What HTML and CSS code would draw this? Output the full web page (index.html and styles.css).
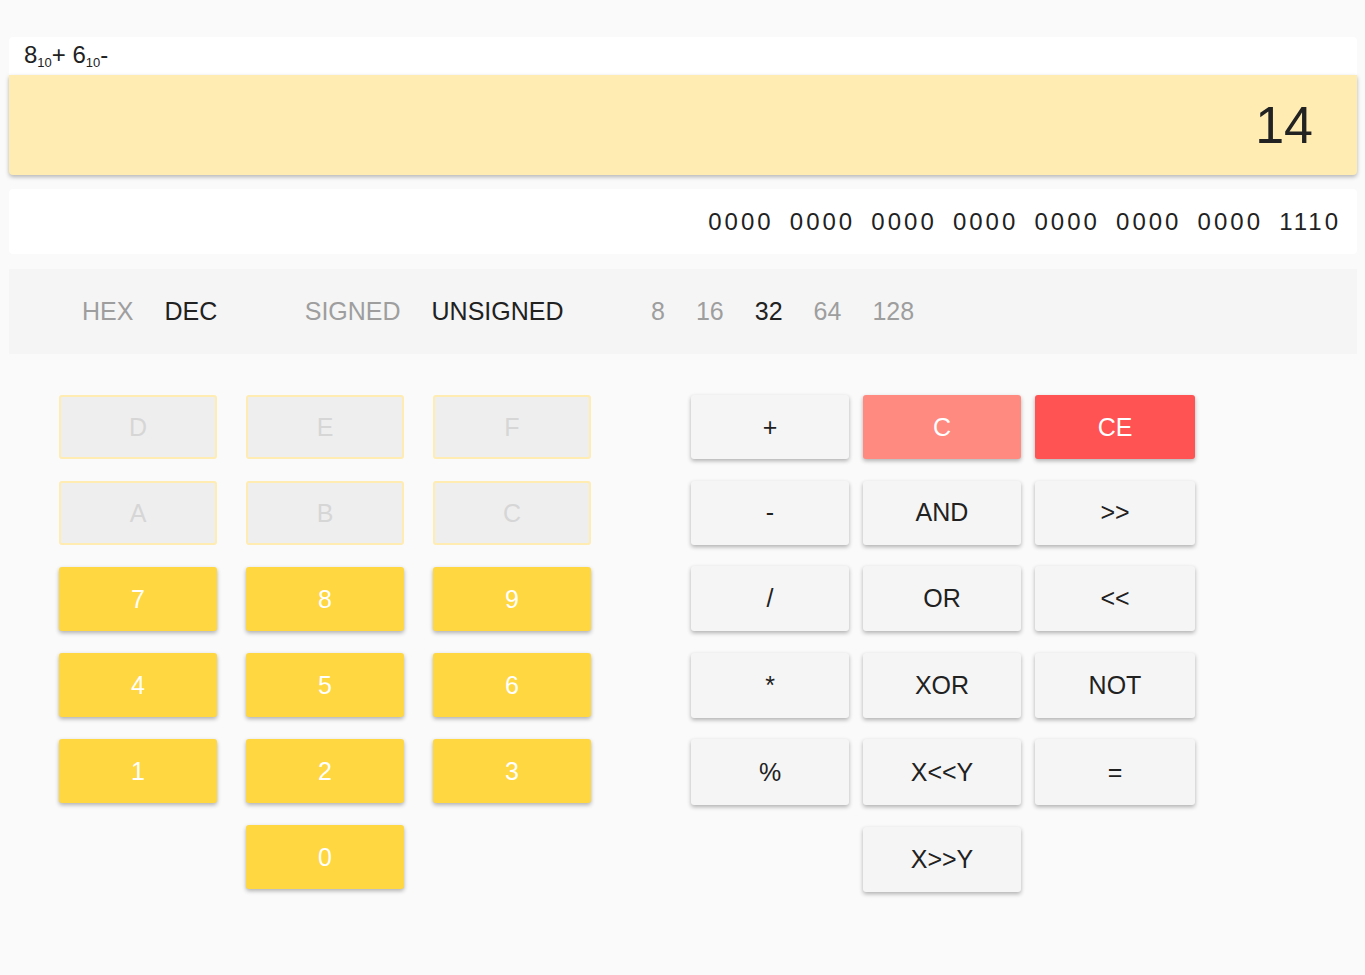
FILE: index.html
```html
<!DOCTYPE html>
<html>
<head>
<meta charset="utf-8">
<link rel="stylesheet" href="styles.css">
</head>
<body>
<div class="app">
  <div class="expr">8<sub>10</sub>+ 6<sub>10</sub>-</div>
  <div class="display">14</div>
  <div class="binary">0000 0000 0000 0000 0000 0000 0000 1110</div>
  <div class="modes">
    <div class="group">
      <span class="opt">HEX</span>
      <span class="opt on">DEC</span>
    </div>
    <div class="group">
      <span class="opt">SIGNED</span>
      <span class="opt on">UNSIGNED</span>
    </div>
    <div class="group">
      <span class="opt">8</span>
      <span class="opt">16</span>
      <span class="opt on">32</span>
      <span class="opt">64</span>
      <span class="opt">128</span>
    </div>
  </div>
  <div class="pads">
    <div class="numpad">
      <button class="btn hex">D</button>
      <button class="btn hex">E</button>
      <button class="btn hex">F</button>
      <button class="btn hex">A</button>
      <button class="btn hex">B</button>
      <button class="btn hex">C</button>
      <button class="btn num">7</button>
      <button class="btn num">8</button>
      <button class="btn num">9</button>
      <button class="btn num">4</button>
      <button class="btn num">5</button>
      <button class="btn num">6</button>
      <button class="btn num">1</button>
      <button class="btn num">2</button>
      <button class="btn num">3</button>
      <button class="btn num mid">0</button>
    </div>
    <div class="oppad">
      <button class="btn op">+</button>
      <button class="btn clear">C</button>
      <button class="btn clear-all">CE</button>
      <button class="btn op">-</button>
      <button class="btn op">AND</button>
      <button class="btn op">&gt;&gt;</button>
      <button class="btn op">/</button>
      <button class="btn op">OR</button>
      <button class="btn op">&lt;&lt;</button>
      <button class="btn op">*</button>
      <button class="btn op">XOR</button>
      <button class="btn op">NOT</button>
      <button class="btn op">%</button>
      <button class="btn op">X&lt;&lt;Y</button>
      <button class="btn op">=</button>
      <button class="btn op mid">X&gt;&gt;Y</button>
    </div>
  </div>
</div>
</body>
</html>
```

FILE: styles.css
```css
* { box-sizing: border-box; }

html, body {
  margin: 0;
  padding: 0;
  background: #fafafa;
  min-height: 100%;
}

body {
  font-family: "Liberation Sans", Arial, Helvetica, sans-serif;
  color: #212121;
}

.app {
  padding: 37px 8px 60px 9px;
}

.expr {
  height: 38px;
  background: #fff;
  border-radius: 4px 4px 0 0;
  padding: 4px 0 0 15px;
  font-size: 24px;
  line-height: 28px;
}

.expr sub {
  font-size: 13px;
  vertical-align: -4px;
  line-height: 0;
}

.display {
  height: 100px;
  background: #ffecb3;
  border-radius: 0 0 4px 4px;
  box-shadow: 0 2px 4px rgba(0, 0, 0, 0.28);
  display: flex;
  align-items: center;
  justify-content: flex-end;
  padding-right: 44px;
  font-size: 52px;
  color: #222;
  position: relative;
}

.binary {
  margin-top: 14px;
  height: 65px;
  background: #fff;
  border-radius: 4px;
  display: flex;
  align-items: center;
  justify-content: flex-end;
  padding-right: 16px;
  font-size: 24px;
  letter-spacing: 3px;
  word-spacing: 6.5px;
  color: #212121;
}

.modes {
  margin-top: 15px;
  height: 85px;
  background: #f5f5f5;
  display: flex;
  align-items: center;
  padding-left: 57.5px;
  gap: 56.5px;
  font-size: 25px;
}

.group {
  display: flex;
}

.opt {
  padding: 0 15.5px;
  color: #9e9e9e;
}

.opt.on {
  color: #212121;
}

.pads {
  display: flex;
  margin-top: 41px;
  padding-left: 50px;
  gap: 100px;
}

.numpad {
  display: grid;
  grid-template-columns: 158px 158px 158px;
  grid-auto-rows: 64px;
  column-gap: 29px;
  row-gap: 22px;
}

.oppad {
  display: grid;
  grid-template-columns: 158px 158px 160px;
  grid-template-rows: 64px 64px 65px 65px 66px 65px;
  column-gap: 14px;
  row-gap: 21.5px;
}

.btn {
  font-family: inherit;
  font-size: 25px;
  border: none;
  border-radius: 3px;
  padding: 0;
  margin: 0;
  cursor: pointer;
  box-shadow: 0 2px 4px rgba(0, 0, 0, 0.3);
}

.mid {
  grid-column: 2;
}

.hex {
  background: #eeeeee;
  border: 2px solid #ffecb3;
  color: #d6d6d6;
  box-shadow: none;
}

.num {
  background: #ffd740;
  color: #fff;
}

.op {
  background: #f5f5f5;
  color: #212121;
}

.clear {
  background: #ff8a80;
  color: #fff;
}

.clear-all {
  background: #ff5252;
  color: #fff;
}
```
